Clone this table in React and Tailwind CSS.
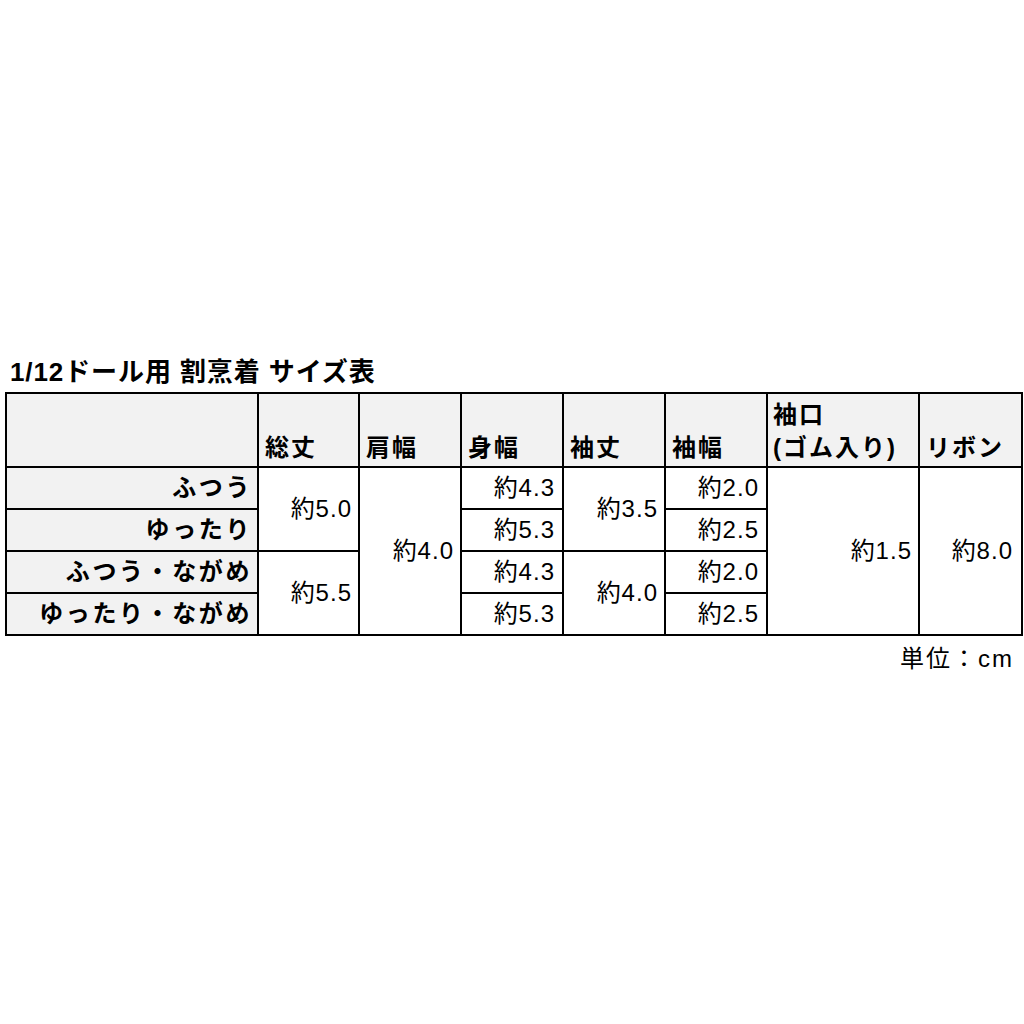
const font = { fontFamily: '"Liberation Sans", "Noto Sans CJK JP", sans-serif' }

const heads = ['総丈', '肩幅', '身幅', '袖丈', '袖幅']

export default function App() {
  return (
    <div className="w-[1024px] h-[1024px] bg-white text-black" style={font}>
      <div className="pt-[355px] pl-[10px] text-[26px] font-bold leading-[35px] tracking-[0.9px]">1/12ドール用 割烹着 サイズ表</div>
      <table className="ml-[5px] mt-[2px] border-collapse border-2 border-black table-fixed w-[1016px] text-[24px]">
        <colgroup>
          <col className="w-[252px]" />
          <col className="w-[101px]" />
          <col className="w-[102px]" />
          <col className="w-[102px]" />
          <col className="w-[102px]" />
          <col className="w-[102px]" />
          <col className="w-[152px]" />
          <col className="w-[103px]" />
        </colgroup>
        <thead>
          <tr className="h-[74px] bg-[#f2f2f2]">
            <th className="border-2 border-black"></th>
            {heads.map((h) => (
              <th key={h} className="border-2 border-black text-left align-bottom pl-[6px] pb-[2px] font-bold leading-[33px] tracking-[2px]">{h}</th>
            ))}
            <th className="border-2 border-black text-left align-bottom pl-[5px] pb-[2px] font-bold leading-[33px] tracking-[2px]">袖口<br />(ゴム入り)</th>
            <th className="border-2 border-black text-left align-bottom pl-[6px] pb-[2px] font-bold leading-[33px] tracking-[2px]">リボン</th>
          </tr>
        </thead>
        <tbody className="tracking-[1px]">
          <tr className="h-[42px]">
            <td className="border-2 border-black bg-[#f2f2f2] text-right pr-[5px] font-bold tracking-[2.6px]">ふつう</td>
            <td rowSpan={2} className="border-2 border-black text-right pr-[6px]">約5.0</td>
            <td rowSpan={4} className="border-2 border-black text-right pr-[6px]">約4.0</td>
            <td className="border-2 border-black text-right pr-[7px]">約4.3</td>
            <td rowSpan={2} className="border-2 border-black text-right pr-[6px]">約3.5</td>
            <td className="border-2 border-black text-right pr-[7px]">約2.0</td>
            <td rowSpan={4} className="border-2 border-black text-right pr-[6px]">約1.5</td>
            <td rowSpan={4} className="border-2 border-black text-right pr-[8px]">約8.0</td>
          </tr>
          <tr className="h-[42px]">
            <td className="border-2 border-black bg-[#f2f2f2] text-right pr-[5px] font-bold tracking-[2.6px]">ゆったり</td>
            <td className="border-2 border-black text-right pr-[7px]">約5.3</td>
            <td className="border-2 border-black text-right pr-[7px]">約2.5</td>
          </tr>
          <tr className="h-[42px]">
            <td className="border-2 border-black bg-[#f2f2f2] text-right pr-[5px] font-bold tracking-[2.6px]">ふつう・ながめ</td>
            <td rowSpan={2} className="border-2 border-black text-right pr-[6px]">約5.5</td>
            <td className="border-2 border-black text-right pr-[7px]">約4.3</td>
            <td rowSpan={2} className="border-2 border-black text-right pr-[6px]">約4.0</td>
            <td className="border-2 border-black text-right pr-[7px]">約2.0</td>
          </tr>
          <tr className="h-[42px]">
            <td className="border-2 border-black bg-[#f2f2f2] text-right pr-[5px] font-bold tracking-[2.6px]">ゆったり・ながめ</td>
            <td className="border-2 border-black text-right pr-[7px]">約5.3</td>
            <td className="border-2 border-black text-right pr-[7px]">約2.5</td>
          </tr>
        </tbody>
      </table>
      <div className="w-[1014px] text-right text-[24px] leading-[30px] mt-[8px] tracking-[2px]">単位：cm</div>
    </div>
  )
}
